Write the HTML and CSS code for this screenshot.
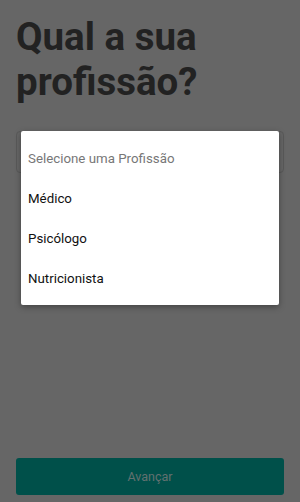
FILE: index.html
```html
<!DOCTYPE html>
<html>
<head>
  <meta charset="utf-8">
  <title>Profissão</title>
  <link rel="stylesheet" href="styles.css">
</head>
<body>
  <div class="screen">
    <h1 class="title">Qual a sua profissão?</h1>

    <div class="picker-wrap">
      <div class="picker"></div>
      <div class="dropdown">
        <div class="option placeholder">Selecione uma Profissão</div>
        <div class="option">Médico</div>
        <div class="option">Psicólogo</div>
        <div class="option">Nutricionista</div>
      </div>
    </div>

    <div class="spacer"></div>

    <button type="button" class="button-next">Avançar</button>
  </div>
</body>
</html>
```

FILE: styles.css
```css
html, body {
  margin: 0;
  height: 100%;
}
body {
  font-family: Roboto, "Liberation Sans", sans-serif;
  background-color: #666;
}
.screen {
  display: flex;
  flex-direction: column;
  height: 502px;
  box-sizing: border-box;
  padding: 14px 16px 7px 16px;
}
.title {
  margin: 0;
  font-size: 38.5px;
  line-height: 45px;
  font-weight: bold;
  color: #222;
  width: 220px;
}
.picker-wrap {
  position: relative;
  margin-top: 27px;
}
.picker {
  height: 40px;
  border: 1px solid #595959;
  border-radius: 4px;
}
.dropdown {
  position: absolute;
  top: 0;
  left: 5px;
  right: 5px;
  background-color: #fff;
  padding: 8px 0 6px 0;
  border-radius: 2px;
  box-shadow: 0 2px 6px rgba(0, 0, 0, 0.35);
}
.option {
  height: 40px;
  line-height: 40px;
  padding: 0 7px;
  font-size: 13.3px;
  color: #111;
}
.option.placeholder {
  color: #777;
}
.spacer {
  flex: 1;
}
.button-next {
  height: 37px;
  border: none;
  border-radius: 3px;
  background-color: #00504a;
  color: #627170;
  font-family: Roboto, "Liberation Sans", sans-serif;
  font-size: 12.5px;
}
```
